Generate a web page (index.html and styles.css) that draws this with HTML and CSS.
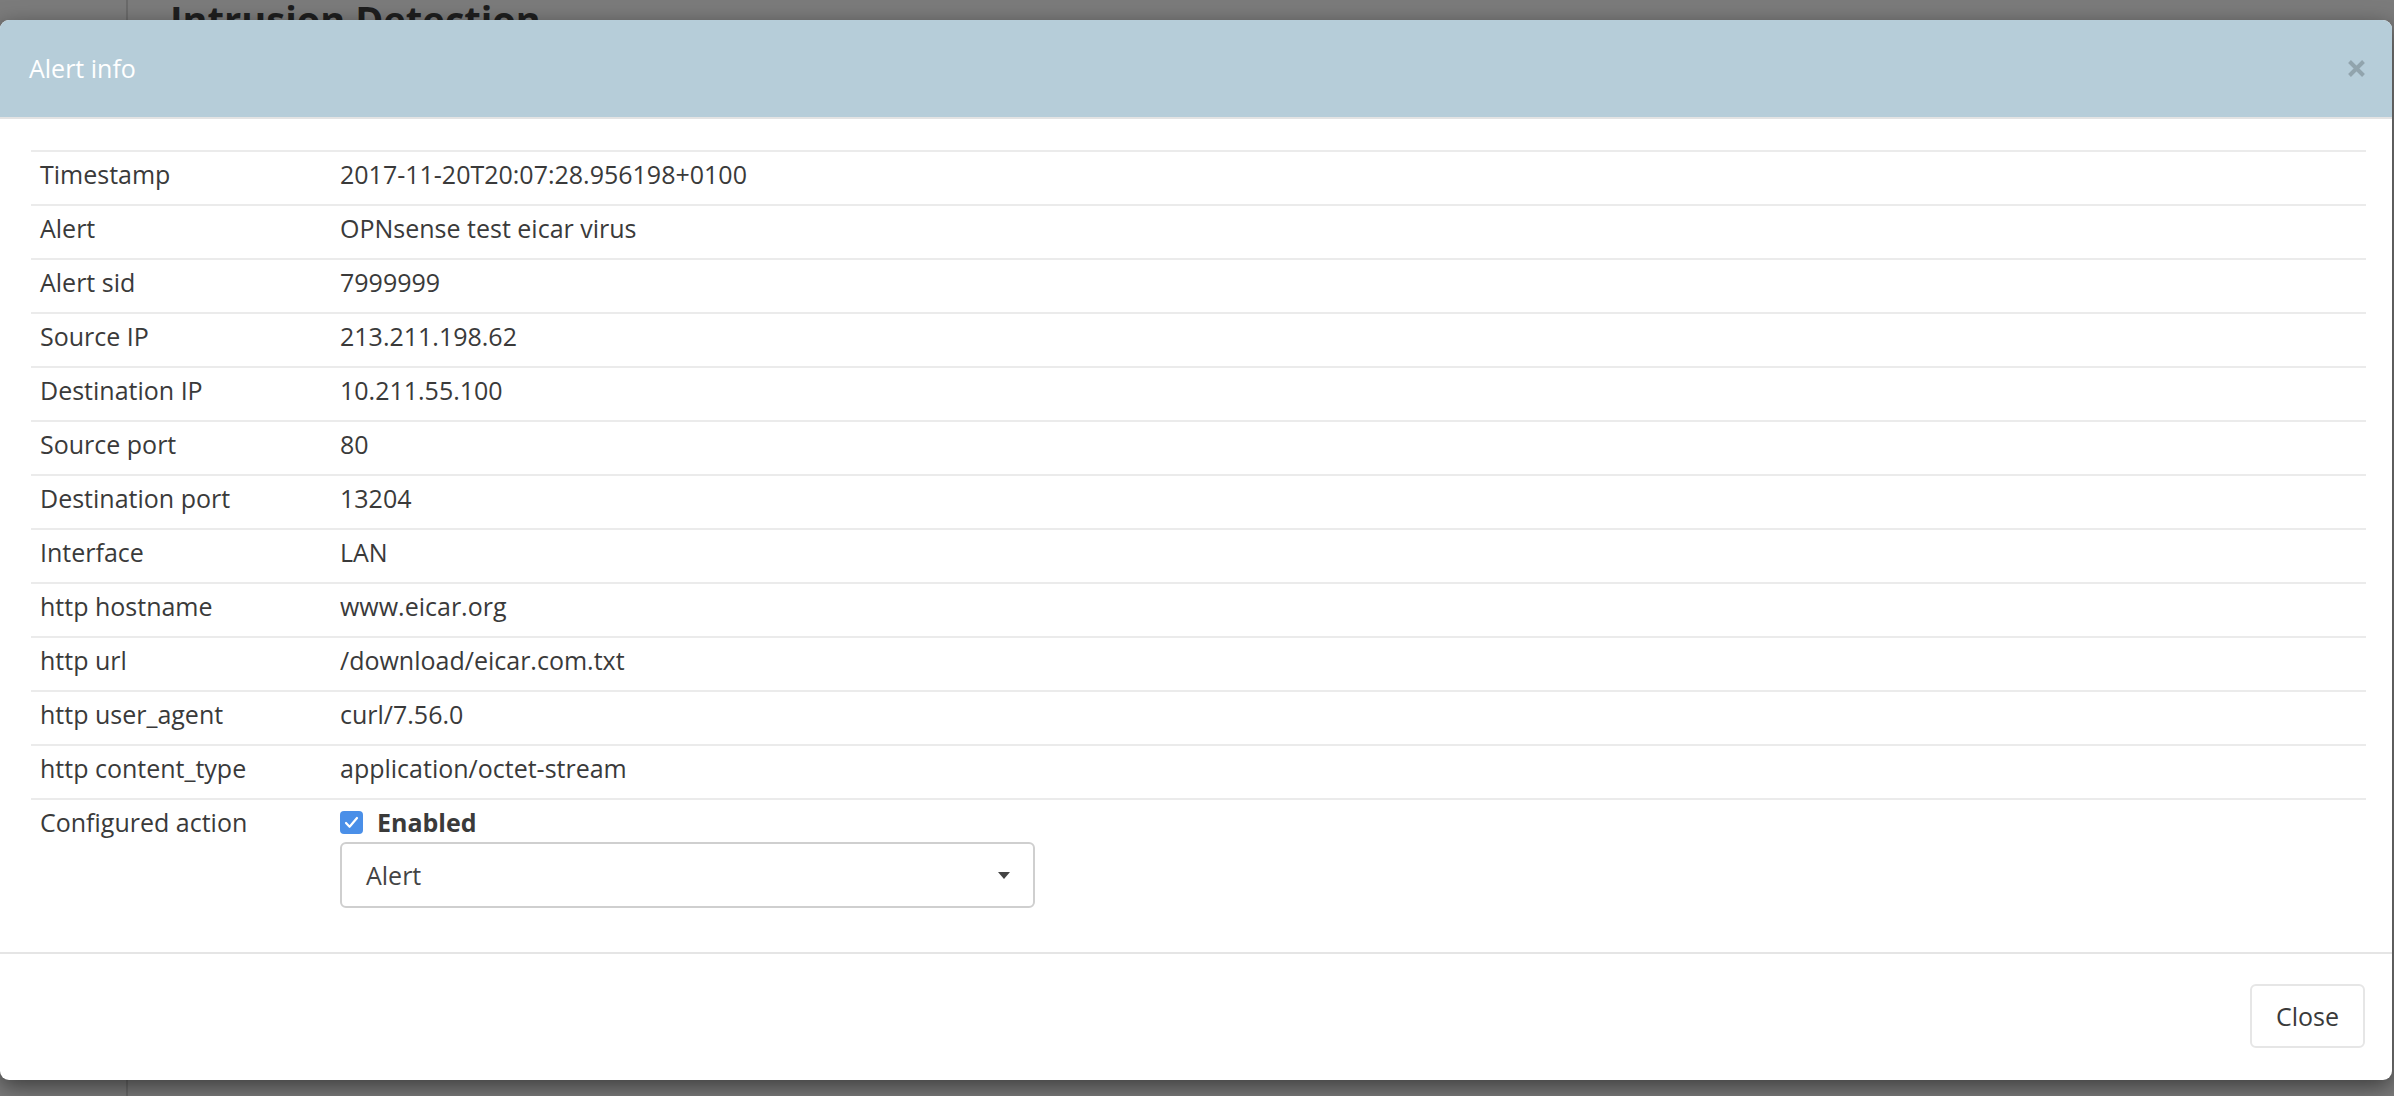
FILE: index.html
```html
<!DOCTYPE html>
<html lang="en">
<head>
<meta charset="utf-8">
<title>Alert info</title>
<link rel="stylesheet" href="styles.css">
</head>
<body>
<div class="page">
  <aside class="sidebar"></aside>
  <main class="content">
    <h1 class="page-title">Intrusion Detection</h1>
  </main>
</div>

<div class="modal">
  <div class="modal-header">
    <h4 class="modal-title">Alert info</h4>
    <button class="close" type="button" aria-label="Close">
      <svg width="19" height="19" viewBox="0 0 19 19"><path d="M2.5 2.5 L16.5 16.5 M16.5 2.5 L2.5 16.5" stroke="rgba(0,0,0,0.2)" stroke-width="4" fill="none"/></svg>
    </button>
  </div>
  <div class="modal-body">
    <table class="info">
      <tbody>
        <tr><td class="label">Timestamp</td><td>2017-11-20T20:07:28.956198+0100</td></tr>
        <tr><td class="label">Alert</td><td>OPNsense test eicar virus</td></tr>
        <tr><td class="label">Alert sid</td><td>7999999</td></tr>
        <tr><td class="label">Source IP</td><td>213.211.198.62</td></tr>
        <tr><td class="label">Destination IP</td><td>10.211.55.100</td></tr>
        <tr><td class="label">Source port</td><td>80</td></tr>
        <tr><td class="label">Destination port</td><td>13204</td></tr>
        <tr><td class="label">Interface</td><td>LAN</td></tr>
        <tr><td class="label">http hostname</td><td>www.eicar.org</td></tr>
        <tr><td class="label">http url</td><td>/download/eicar.com.txt</td></tr>
        <tr><td class="label">http user_agent</td><td>curl/7.56.0</td></tr>
        <tr><td class="label">http content_type</td><td>application/octet-stream</td></tr>
        <tr class="last">
          <td class="label">Configured action</td>
          <td>
            <label class="check">
              <span class="checkbox">
                <svg width="15" height="13" viewBox="0 0 15 13"><path d="M2 7 L5.6 10.8 L13 2" fill="none" stroke="#fff" stroke-width="2.2" stroke-linecap="round" stroke-linejoin="round"/></svg>
              </span>
              <span class="check-text">Enabled</span>
            </label>
            <div class="select">
              <span>Alert</span>
              <span class="caret"></span>
            </div>
          </td>
        </tr>
      </tbody>
    </table>
  </div>
  <div class="modal-footer">
    <button class="btn" type="button">Close</button>
  </div>
</div>
</body>
</html>
```

FILE: styles.css
```css
html, body {
  margin: 0;
  padding: 0;
}

body {
  background: #7b7b7b;
  font-family: "Open Sans", "Noto Sans", sans-serif;
  overflow: hidden;
  width: 2394px;
  height: 1096px;
}

.page {
  display: flex;
  height: 1096px;
}

.sidebar {
  width: 126px;
  border-right: 2px solid #6a6a6a;
  background: #7b7b7b;
}

.content {
  flex: 1;
  padding-left: 42px;
}

.page-title {
  margin: 0;
  font-size: 38px;
  line-height: 39px;
  font-weight: 700;
  color: #1e1e1e;
}

.modal {
  position: absolute;
  top: 20px;
  left: 0;
  width: 2392px;
  background: #fff;
  border-radius: 9px;
  box-shadow: 0 7px 22px rgba(0, 0, 0, 0.5);
  overflow: hidden;
}

.modal-header {
  height: 97px;
  background: #b6cdd9;
  border-bottom: 2px solid #e3e3e3;
  display: flex;
  align-items: center;
  justify-content: space-between;
  padding: 0 26px 0 29px;
}

.modal-title {
  margin: 0;
  font-size: 25px;
  font-weight: 400;
  color: #fff;
  line-height: 29px;
}

.close {
  background: none;
  border: 0;
  padding: 0;
  display: flex;
  align-items: center;
  justify-content: center;
  width: 19px;
  height: 19px;
}

.modal-body {
  padding: 31px 26px 32px 31px;
}

.info {
  width: 100%;
  border-collapse: collapse;
  table-layout: fixed;
}

.info td {
  border-top: 2px solid #ebebeb;
  padding: 8px 10px 15px 9px;
  font-size: 25px;
  line-height: 29px;
  color: #3a3a3a;
  vertical-align: top;
}

.info td.label {
  width: 300px;
  box-sizing: border-box;
}

.info tr.last td {
  padding-bottom: 12px;
}

.check {
  display: flex;
  align-items: center;
  gap: 14px;
  height: 29px;
}

.checkbox {
  width: 23px;
  height: 23px;
  border-radius: 4px;
  background: #4a8fe8;
  display: flex;
  align-items: center;
  justify-content: center;
}

.check-text {
  font-weight: 700;
  color: #3a3a3a;
}

.select {
  margin-top: 5px;
  width: 695px;
  height: 66px;
  box-sizing: border-box;
  border: 2px solid #cfcfcf;
  border-radius: 6px;
  display: flex;
  align-items: center;
  justify-content: space-between;
  padding: 0 23px 0 24px;
  color: #444;
}

.caret {
  width: 0;
  height: 0;
  border-left: 6.5px solid transparent;
  border-right: 6.5px solid transparent;
  border-top: 7px solid #444;
}

.modal-footer {
  border-top: 2px solid #e5e5e5;
  padding: 30px 27px 32px;
  display: flex;
  justify-content: flex-end;
}

.btn {
  width: 115px;
  height: 64px;
  box-sizing: border-box;
  border: 2px solid #e6e6e6;
  border-radius: 6px;
  background: #fff;
  font-family: "Open Sans", sans-serif;
  font-size: 25px;
  color: #3a3a3a;
  padding: 0;
}
```
